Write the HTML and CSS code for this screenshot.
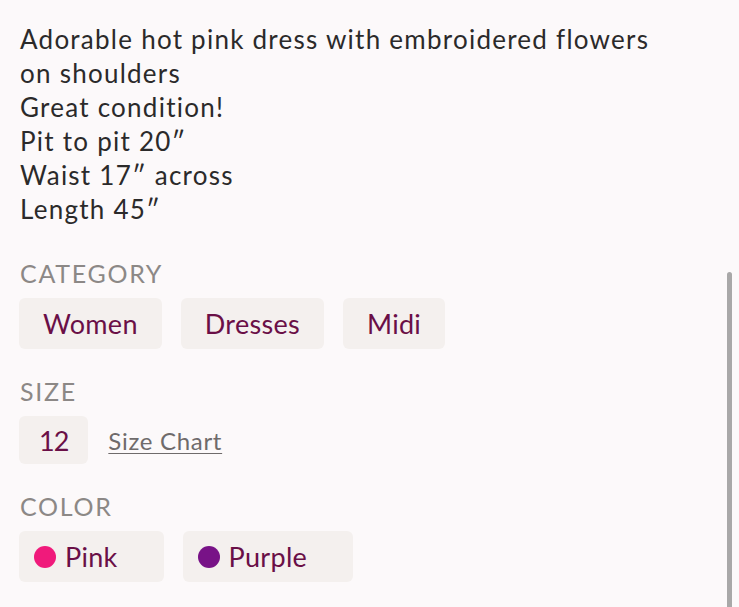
FILE: index.html
```html
<!DOCTYPE html>
<html lang="en">
<head>
<meta charset="utf-8">
<title>Listing details</title>
<link rel="stylesheet" href="styles.css">
</head>
<body>
<main class="details">
  <p class="description">Adorable hot pink dress with embroidered flowers<br>on shoulders<br>Great condition!<br>Pit to pit 20″<br>Waist 17″ across<br>Length 45″</p>

  <section class="group">
    <h2 class="label">CATEGORY</h2>
    <div class="chips">
      <span class="chip">Women</span>
      <span class="chip">Dresses</span>
      <span class="chip">Midi</span>
    </div>
  </section>

  <section class="group">
    <h2 class="label">SIZE</h2>
    <div class="chips chips-size">
      <span class="chip chip-size">12</span>
      <a class="size-chart" href="#">Size Chart</a>
    </div>
  </section>

  <section class="group">
    <h2 class="label">COLOR</h2>
    <div class="chips">
      <span class="chip chip-color"><span class="dot dot-pink"></span>Pink</span>
      <span class="chip chip-color"><span class="dot dot-purple"></span>Purple</span>
    </div>
  </section>
</main>
<div class="scrollbar"></div>
</body>
</html>
```
FILE: styles.css
```css
html, body {
  margin: 0;
  padding: 0;
  background: #fcf9fa;
}
body {
  font-family: Lato, "Noto Sans", sans-serif;
  color: #2b2a2a;
  overflow: hidden;
}
.details {
  padding: 22px 20px 0 20px;
}
.description {
  margin: 0;
  font-size: 26px;
  line-height: 34px;
  letter-spacing: 1.25px;
  white-space: nowrap;
}
.group {
  margin-top: 32px;
}
.group + .group {
  margin-top: 27px;
}
.label {
  margin: 0;
  font-size: 25px;
  line-height: 30px;
  font-weight: 400;
  letter-spacing: 1.7px;
  color: #8c8886;
}
.chips {
  display: flex;
  gap: 19px;
  margin-top: 10px;
  margin-left: -1px;
  align-items: center;
}
.chip {
  display: flex;
  align-items: center;
  height: 51px;
  padding: 0 24px;
  background: #f4f0ee;
  border-radius: 6px;
  color: #6a0f47;
  font-size: 27px;
  letter-spacing: 0.3px;
}
.chips-size {
  gap: 20px;
}
.chip-size {
  height: 48px;
  padding: 0 20px;
  letter-spacing: -1px;
}
.size-chart {
  color: #6f6b6b;
  font-size: 24px;
  letter-spacing: 0.7px;
  text-decoration: underline;
  text-underline-offset: 3px;
  text-decoration-thickness: 1px;
}
.chip-color {
  padding: 0 46px 0 15px;
}
.dot {
  width: 22px;
  height: 22px;
  border-radius: 50%;
  margin-right: 9px;
  flex: none;
}
.dot-pink { background: #f01a7b; }
.dot-purple { background: #781287; }
.scrollbar {
  position: fixed;
  left: 727px;
  top: 272px;
  width: 5px;
  height: 340px;
  border-radius: 3px;
  background: #a9a8a8;
}
```
